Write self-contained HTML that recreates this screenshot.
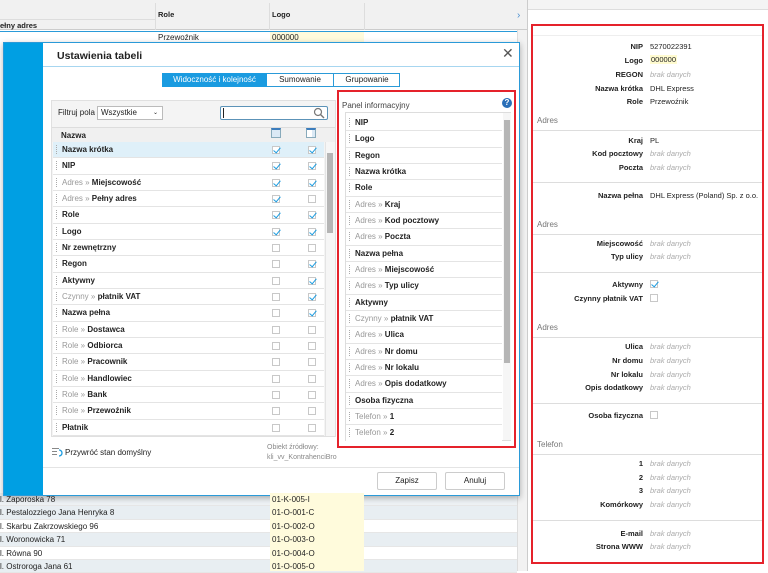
<!DOCTYPE html>
<html><head><meta charset="utf-8"><style>
*{box-sizing:border-box;margin:0;padding:0}
body{width:768px;height:571px;position:relative;overflow:hidden;background:#fff;font-family:"Liberation Sans",sans-serif;font-size:8px;color:#222}
.a{position:absolute}
.b{font-weight:bold}
.g{color:#999}
.row{position:absolute;left:0;height:16.33px;border-bottom:1px solid #e4e4e4;background:#fff;white-space:nowrap;line-height:15px}
.row .d{position:absolute;left:3px;top:3px;width:2px;height:9px;border-left:1px dotted #aaa}
.row span.t{position:absolute;left:9px}
.cb{position:absolute;top:4px;width:8px;height:8px;border:1px solid #c8c8c8;background:#fff}
.cb.on::after{content:"";position:absolute;left:2px;top:-1px;width:3px;height:6px;border:solid #1a9be0;border-width:0 1.5px 1.5px 0;transform:rotate(40deg)}
.rp{font-size:7.5px}
.lbl{position:absolute;right:119px;font-weight:bold;text-align:right;white-space:nowrap}
.val{position:absolute;left:117px;white-space:nowrap}
.nd{position:absolute;left:117px;color:#aaa;font-style:italic}
.sec{position:absolute;left:4px;color:#777;font-size:8px}
.ln{position:absolute;left:0;right:0;height:1px;background:#ddd}
.bg{position:absolute;left:0;width:517px;height:13.4px;line-height:13px;border-bottom:1px solid #e6e6e6}
</style></head><body>

<div class="a" style="left:0;top:0;width:528px;height:30px;background:#f1f1f1;border-bottom:1px solid #ccc"></div>
<div class="a" style="left:0;top:19px;width:155px;height:11px;border-top:1px solid #ddd"></div>
<div class="a b" style="left:0;top:21px;font-size:7.5px">ełny adres</div>
<div class="a" style="left:155px;top:3px;width:1px;height:27px;background:#ddd"></div>
<div class="a" style="left:269px;top:3px;width:1px;height:27px;background:#ddd"></div>
<div class="a" style="left:364px;top:3px;width:1px;height:27px;background:#ddd"></div>
<div class="a b" style="left:158px;top:10px;font-size:7.5px">Role</div>
<div class="a b" style="left:272px;top:10px;font-size:7.5px">Logo</div>
<div class="a" style="left:517px;top:10px;width:11px;height:20px;color:#4a8fd0;font-size:10px">›</div>
<div class="a" style="left:0;top:31px;width:517px;height:1px;background:#2a9ad8"></div>
<div class="a" style="left:270px;top:32px;width:94px;height:12px;background:#fffbdc"></div>
<div class="a" style="left:158px;top:33px">Przewoźnik</div>
<div class="a" style="left:272px;top:33px">000000</div>
<div class="a" style="left:517px;top:30px;width:11px;height:541px;background:#f2f2f2;border-left:1px solid #ddd"></div>
<div class="a" style="left:527px;top:0;width:1px;height:571px;background:#ccc"></div>

<div class="a" style="left:270px;top:493px;width:94px;height:78px;background:#fffbdc;z-index:1"></div>
<div class="bg" style="top:493px;background:#eef2f5">l. Zaporoska 78</div>
<div class="bg" style="top:506.4px;background:#e8eef2">l. Pestalozziego Jana Henryka 8</div>
<div class="bg" style="top:519.8px;background:#fff">l. Skarbu Zakrzowskiego 96</div>
<div class="bg" style="top:533.2px;background:#e8eef2">l. Woronowicka 71</div>
<div class="bg" style="top:546.6px;background:#fff">l. Równa 90</div>
<div class="bg" style="top:560px;background:#e8eef2">l. Ostroroga Jana 61</div>
<div class="a" style="left:272px;top:493px;z-index:2;line-height:13.4px">01-K-005-I<br>01-O-001-C<br>01-O-002-O<br>01-O-003-O<br>01-O-004-O<br>01-O-005-O</div>

<div class="a" style="left:3px;top:42px;width:517px;height:454px;background:#fff;border:1px solid #2a9ad8;box-shadow:0 2px 6px rgba(0,0,0,.3)"></div>
<div class="a" style="left:4px;top:43px;width:39px;height:452px;background:#009fe3"></div>
<div class="a b" style="left:57px;top:50px;font-size:10.5px;color:#222">Ustawienia tabeli</div>
<div class="a" style="left:502px;top:45px;font-size:14px;color:#555">✕</div>
<div class="a" style="left:43px;top:66px;width:476px;height:1px;background:#a7d6f0"></div>

<div class="a" style="left:162px;top:73px;width:238px;height:14px;border:1px solid #2a9ad8;background:#fff"></div>
<div class="a" style="left:162px;top:73px;width:105px;height:14px;background:#1a9be0;color:#fff;text-align:center;line-height:14px">Widoczność i kolejność</div>
<div class="a" style="left:267px;top:73px;width:67px;height:14px;text-align:center;line-height:14px;border-right:1px solid #2a9ad8">Sumowanie</div>
<div class="a" style="left:334px;top:73px;width:66px;height:14px;text-align:center;line-height:14px">Grupowanie</div>

<div class="a" style="left:51px;top:100px;width:285px;height:337px;background:#f4f4f4;border:1px solid #e0e0e0"></div>
<div class="a" style="left:58px;top:108px">Filtruj pola</div>
<div class="a" style="left:97px;top:106px;width:66px;height:14px;border:1px solid #bbb;background:#fff;padding-left:3px;line-height:12px">Wszystkie<span style="position:absolute;right:4px;top:0;font-size:6px">⌄</span></div>
<div class="a" style="left:220px;top:106px;width:108px;height:14px;border:1px solid #5c93b8;border-radius:2px;background:#fff"></div>
<div class="a" style="left:223px;top:108px;width:1px;height:10px;background:#222"></div>
<svg class="a" style="left:313px;top:107px" width="12" height="12"><circle cx="5" cy="5" r="3.5" fill="none" stroke="#777" stroke-width="1.2"/><line x1="7.5" y1="7.5" x2="11" y2="11" stroke="#777" stroke-width="1.4"/></svg>
<div class="a" style="left:52px;top:127px;width:283px;height:15px;background:#f0f0f0;border-top:1px solid #ddd"></div>
<div class="a b" style="left:61px;top:131px">Nazwa</div>
<div class="a" style="left:271px;top:128px;width:10px;height:10px;border:1px solid #8ab;border-top:2px solid #3c7dbd;background:#dbe9f5"></div>
<div class="a" style="left:306px;top:128px;width:10px;height:10px;border:1px solid #8ab;border-top:2px solid #3c7dbd;background:linear-gradient(90deg,#fff 60%,#dbe9f5 60%)"></div>

<div class="a" style="left:53px;top:142px;width:271px;height:294px;background:#fff">
<div class="row" style="top:0;width:271px;background:#dff0f9"><i class="d"></i><span class="t b">Nazwa krótka</span><i class="cb on" style="left:219px"></i><i class="cb on" style="left:255px"></i></div>
<div class="row" style="top:16.33px;width:271px"><i class="d"></i><span class="t b">NIP</span><i class="cb on" style="left:219px"></i><i class="cb on" style="left:255px"></i></div>
<div class="row" style="top:32.66px;width:271px"><i class="d"></i><span class="t"><span class="g">Adres » </span><b>Miejscowość</b></span><i class="cb on" style="left:219px"></i><i class="cb on" style="left:255px"></i></div>
<div class="row" style="top:49px;width:271px"><i class="d"></i><span class="t"><span class="g">Adres » </span><b>Pełny adres</b></span><i class="cb on" style="left:219px"></i><i class="cb" style="left:255px"></i></div>
<div class="row" style="top:65.33px;width:271px"><i class="d"></i><span class="t b">Role</span><i class="cb on" style="left:219px"></i><i class="cb on" style="left:255px"></i></div>
<div class="row" style="top:81.66px;width:271px"><i class="d"></i><span class="t b">Logo</span><i class="cb on" style="left:219px"></i><i class="cb on" style="left:255px"></i></div>
<div class="row" style="top:98px;width:271px"><i class="d"></i><span class="t b">Nr zewnętrzny</span><i class="cb" style="left:219px"></i><i class="cb" style="left:255px"></i></div>
<div class="row" style="top:114.33px;width:271px"><i class="d"></i><span class="t b">Regon</span><i class="cb" style="left:219px"></i><i class="cb on" style="left:255px"></i></div>
<div class="row" style="top:130.66px;width:271px"><i class="d"></i><span class="t b">Aktywny</span><i class="cb" style="left:219px"></i><i class="cb on" style="left:255px"></i></div>
<div class="row" style="top:147px;width:271px"><i class="d"></i><span class="t"><span class="g">Czynny » </span><b>płatnik VAT</b></span><i class="cb" style="left:219px"></i><i class="cb on" style="left:255px"></i></div>
<div class="row" style="top:163.33px;width:271px"><i class="d"></i><span class="t b">Nazwa pełna</span><i class="cb" style="left:219px"></i><i class="cb on" style="left:255px"></i></div>
<div class="row" style="top:179.66px;width:271px"><i class="d"></i><span class="t"><span class="g">Role » </span><b>Dostawca</b></span><i class="cb" style="left:219px"></i><i class="cb" style="left:255px"></i></div>
<div class="row" style="top:196px;width:271px"><i class="d"></i><span class="t"><span class="g">Role » </span><b>Odbiorca</b></span><i class="cb" style="left:219px"></i><i class="cb" style="left:255px"></i></div>
<div class="row" style="top:212.33px;width:271px"><i class="d"></i><span class="t"><span class="g">Role » </span><b>Pracownik</b></span><i class="cb" style="left:219px"></i><i class="cb" style="left:255px"></i></div>
<div class="row" style="top:228.66px;width:271px"><i class="d"></i><span class="t"><span class="g">Role » </span><b>Handlowiec</b></span><i class="cb" style="left:219px"></i><i class="cb" style="left:255px"></i></div>
<div class="row" style="top:245px;width:271px"><i class="d"></i><span class="t"><span class="g">Role » </span><b>Bank</b></span><i class="cb" style="left:219px"></i><i class="cb" style="left:255px"></i></div>
<div class="row" style="top:261.33px;width:271px"><i class="d"></i><span class="t"><span class="g">Role » </span><b>Przewoźnik</b></span><i class="cb" style="left:219px"></i><i class="cb" style="left:255px"></i></div>
<div class="row" style="top:277.66px;width:271px"><i class="d"></i><span class="t b">Płatnik</span><i class="cb" style="left:219px"></i><i class="cb" style="left:255px"></i></div>
</div>
<div class="a" style="left:325px;top:142px;width:10px;height:294px;background:#f6f6f6;border-left:1px solid #e4e4e4"></div>
<div class="a" style="left:327px;top:153px;width:6px;height:80px;background:#b5b5b5"></div>

<svg class="a" style="left:52px;top:447px" width="12" height="10"><line x1="0" y1="1.5" x2="7" y2="1.5" stroke="#888"/><line x1="0" y1="4.5" x2="5" y2="4.5" stroke="#888"/><line x1="0" y1="7.5" x2="5" y2="7.5" stroke="#888"/><path d="M7 3 A3 3 0 1 1 7 9" fill="none" stroke="#1a9be0" stroke-width="1.3"/></svg>
<div class="a" style="left:65px;top:448px;font-size:8px">Przywróć stan domyślny</div>
<div class="a" style="left:267px;top:443px;color:#888;font-size:7px;line-height:10px">Obiekt źródłowy:<br>kli_vv_KontrahenciBro</div>
<div class="a" style="left:43px;top:467px;width:476px;height:1px;background:#e4e4e4"></div>
<div class="a" style="left:377px;top:472px;width:60px;height:18px;border:1px solid #ccc;border-radius:2px;background:#fff;text-align:center;line-height:16px">Zapisz</div>
<div class="a" style="left:445px;top:472px;width:60px;height:18px;border:1px solid #ccc;border-radius:2px;background:#fff;text-align:center;line-height:16px">Anuluj</div>

<div class="a" style="left:337px;top:90px;width:179px;height:358px;border:2px solid #e5222b"></div>
<div class="a" style="left:342px;top:101px;color:#444">Panel informacyjny</div>
<div class="a" style="left:502px;top:98px;width:10px;height:10px;border-radius:50%;background:#2a6fb8;color:#fff;font-weight:bold;font-size:8px;text-align:center;line-height:10px">?</div>
<div class="a" style="left:345px;top:112px;width:166px;height:329px;border:1px solid #ddd;background:#fff;overflow:hidden"></div>
<div class="a" style="left:346px;top:115px;width:156px;height:325px">
<div class="row" style="top:0;width:156px"><i class="d"></i><span class="t b">NIP</span></div>
<div class="row" style="top:16.33px;width:156px"><i class="d"></i><span class="t b">Logo</span></div>
<div class="row" style="top:32.66px;width:156px"><i class="d"></i><span class="t b">Regon</span></div>
<div class="row" style="top:49px;width:156px"><i class="d"></i><span class="t b">Nazwa krótka</span></div>
<div class="row" style="top:65.33px;width:156px"><i class="d"></i><span class="t b">Role</span></div>
<div class="row" style="top:81.66px;width:156px"><i class="d"></i><span class="t"><span class="g">Adres » </span><b>Kraj</b></span></div>
<div class="row" style="top:98px;width:156px"><i class="d"></i><span class="t"><span class="g">Adres » </span><b>Kod pocztowy</b></span></div>
<div class="row" style="top:114.33px;width:156px"><i class="d"></i><span class="t"><span class="g">Adres » </span><b>Poczta</b></span></div>
<div class="row" style="top:130.66px;width:156px"><i class="d"></i><span class="t b">Nazwa pełna</span></div>
<div class="row" style="top:147px;width:156px"><i class="d"></i><span class="t"><span class="g">Adres » </span><b>Miejscowość</b></span></div>
<div class="row" style="top:163.33px;width:156px"><i class="d"></i><span class="t"><span class="g">Adres » </span><b>Typ ulicy</b></span></div>
<div class="row" style="top:179.66px;width:156px"><i class="d"></i><span class="t b">Aktywny</span></div>
<div class="row" style="top:196px;width:156px"><i class="d"></i><span class="t"><span class="g">Czynny » </span><b>płatnik VAT</b></span></div>
<div class="row" style="top:212.33px;width:156px"><i class="d"></i><span class="t"><span class="g">Adres » </span><b>Ulica</b></span></div>
<div class="row" style="top:228.66px;width:156px"><i class="d"></i><span class="t"><span class="g">Adres » </span><b>Nr domu</b></span></div>
<div class="row" style="top:245px;width:156px"><i class="d"></i><span class="t"><span class="g">Adres » </span><b>Nr lokalu</b></span></div>
<div class="row" style="top:261.33px;width:156px"><i class="d"></i><span class="t"><span class="g">Adres » </span><b>Opis dodatkowy</b></span></div>
<div class="row" style="top:277.66px;width:156px"><i class="d"></i><span class="t b">Osoba fizyczna</span></div>
<div class="row" style="top:294px;width:156px"><i class="d"></i><span class="t"><span class="g">Telefon » </span><b>1</b></span></div>
<div class="row" style="top:310.33px;width:156px;border:0"><i class="d"></i><span class="t"><span class="g">Telefon » </span><b>2</b></span></div>
</div>
<div class="a" style="left:503px;top:113px;width:8px;height:327px;background:#f6f6f6"></div>
<div class="a" style="left:504px;top:120px;width:6px;height:243px;background:#b5b5b5"></div>

<div class="a" style="left:528px;top:0;width:240px;height:10px;background:#f4f4f4;border-bottom:1px solid #ddd"></div>
<div class="a" style="left:531px;top:24px;width:233px;height:540px;border:2px solid #e5222b"></div>
<div class="a rp" style="left:533px;top:26px;width:229px;height:536px">
<div class="ln" style="top:9px;background:#eee"></div>
<div class="lbl" style="top:16px">NIP</div><div class="val" style="top:16px">5270022391</div>
<div class="lbl" style="top:30px">Logo</div><div class="val" style="top:29px;background:#fffbd0;padding:0 1px">000000</div>
<div class="lbl" style="top:44px">REGON</div><div class="nd" style="top:44px">brak danych</div>
<div class="lbl" style="top:58px">Nazwa krótka</div><div class="val" style="top:58px">DHL Express</div>
<div class="lbl" style="top:71px">Role</div><div class="val" style="top:71px">Przewoźnik</div>
<div class="sec" style="top:90px">Adres</div><div class="ln" style="top:104px"></div>
<div class="lbl" style="top:110px">Kraj</div><div class="val" style="top:110px">PL</div>
<div class="lbl" style="top:123px">Kod pocztowy</div><div class="nd" style="top:123px">brak danych</div>
<div class="lbl" style="top:137px">Poczta</div><div class="nd" style="top:137px">brak danych</div>
<div class="ln" style="top:156px"></div>
<div class="lbl" style="top:165px">Nazwa pełna</div><div class="val" style="top:165px">DHL Express (Poland) Sp. z o.o.</div>
<div class="sec" style="top:194px">Adres</div><div class="ln" style="top:208px"></div>
<div class="lbl" style="top:213px">Miejscowość</div><div class="nd" style="top:213px">brak danych</div>
<div class="lbl" style="top:226px">Typ ulicy</div><div class="nd" style="top:226px">brak danych</div>
<div class="ln" style="top:246px"></div>
<div class="lbl" style="top:254px">Aktywny</div><i class="cb on" style="left:117px;top:254px"></i>
<div class="lbl" style="top:268px">Czynny płatnik VAT</div><i class="cb" style="left:117px;top:268px"></i>
<div class="sec" style="top:297px">Adres</div><div class="ln" style="top:311px"></div>
<div class="lbl" style="top:316px">Ulica</div><div class="nd" style="top:316px">brak danych</div>
<div class="lbl" style="top:330px">Nr domu</div><div class="nd" style="top:330px">brak danych</div>
<div class="lbl" style="top:344px">Nr lokalu</div><div class="nd" style="top:344px">brak danych</div>
<div class="lbl" style="top:357px">Opis dodatkowy</div><div class="nd" style="top:357px">brak danych</div>
<div class="ln" style="top:377px"></div>
<div class="lbl" style="top:385px">Osoba fizyczna</div><i class="cb" style="left:117px;top:385px"></i>
<div class="sec" style="top:414px">Telefon</div><div class="ln" style="top:428px"></div>
<div class="lbl" style="top:433px">1</div><div class="nd" style="top:433px">brak danych</div>
<div class="lbl" style="top:447px">2</div><div class="nd" style="top:447px">brak danych</div>
<div class="lbl" style="top:460px">3</div><div class="nd" style="top:460px">brak danych</div>
<div class="lbl" style="top:474px">Komórkowy</div><div class="nd" style="top:474px">brak danych</div>
<div class="ln" style="top:494px"></div>
<div class="lbl" style="top:503px">E-mail</div><div class="nd" style="top:503px">brak danych</div>
<div class="lbl" style="top:516px">Strona WWW</div><div class="nd" style="top:516px">brak danych</div>
</div>
</body></html>
